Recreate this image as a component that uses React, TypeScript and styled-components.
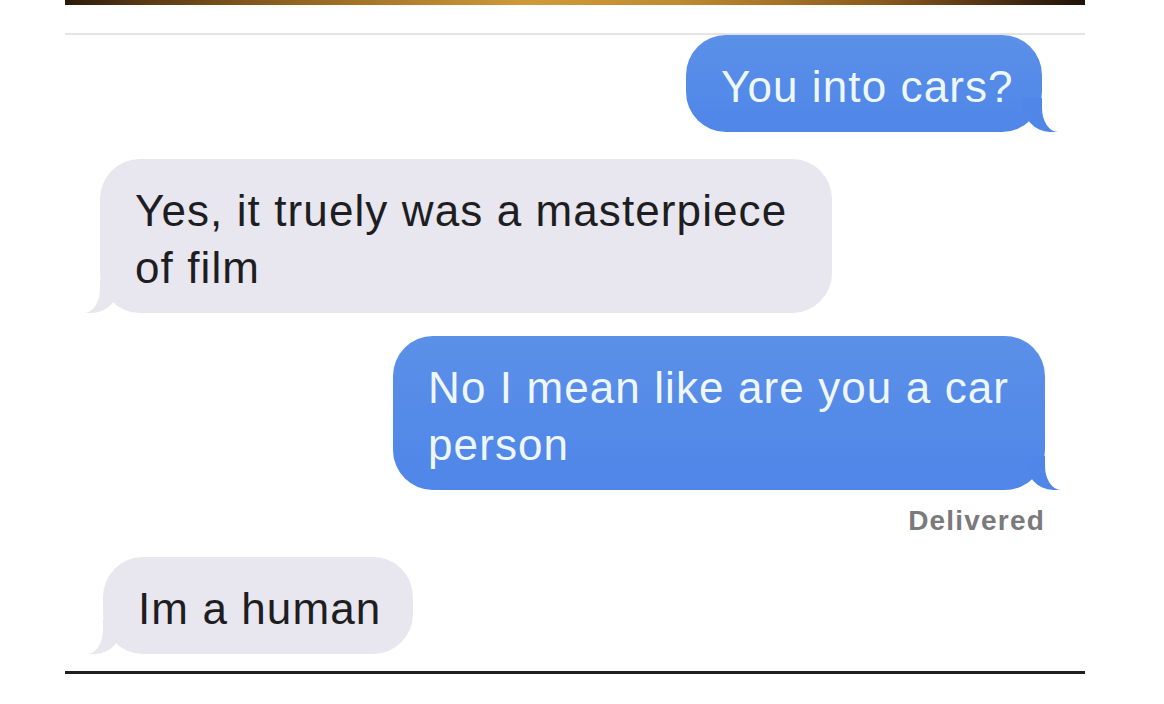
import React from "react";
import styled, { createGlobalStyle, css } from "styled-components";

const Global = createGlobalStyle`
  html, body { margin: 0; padding: 0; background: #ffffff; }
  body { font-family: "Liberation Sans", Arial, sans-serif; }
`;

const Page = styled.div`
  width: 1020px;
  margin-left: 65px;
  display: flex;
  flex-direction: column;
`;

const TopBar = styled.div`
  height: 5px;
  background: linear-gradient(
    90deg,
    #2a1a0c 0%,
    #5a3a14 8%,
    #9a6a22 25%,
    #d09a3a 45%,
    #c08a30 60%,
    #8a5a1c 80%,
    #3a2210 95%,
    #1e120a 100%
  );
`;

const Divider = styled.div`
  margin-top: 28px;
  height: 2px;
  background: #e4e4e6;
`;

const Thread = styled.div`
  display: flex;
  flex-direction: column;
`;

const Row = styled.div<{ $side: "left" | "right"; $inset: number; $gap: number }>`
  display: flex;
  justify-content: ${(p) => (p.$side === "right" ? "flex-end" : "flex-start")};
  padding-left: ${(p) => (p.$side === "left" ? p.$inset : 0)}px;
  padding-right: ${(p) => (p.$side === "right" ? p.$inset : 0)}px;
  margin-top: ${(p) => p.$gap}px;
`;

const Bubble = styled.div<{ $side: "left" | "right"; $w: number }>`
  position: relative;
  box-sizing: border-box;
  width: ${(p) => p.$w}px;
  border-radius: 40px;
  font-size: 44px;
  line-height: 57px;
  letter-spacing: 1.1px;
  padding: 23px 28px 17px 35px;
  ${(p) =>
    p.$side === "right"
      ? css`
          background: linear-gradient(180deg, #5b90e8 0%, #4f86e8 100%);
          color: #eef7fb;
        `
      : css`
          background: #e8e6ee;
          color: #1e1e22;
        `}

  &::before {
    content: "";
    position: absolute;
    bottom: 0;
    height: 34px;
    width: 36px;
    ${(p) =>
      p.$side === "right"
        ? css`
            right: -16px;
            background: #4f86e8;
            border-bottom-left-radius: 28px 32px;
          `
        : css`
            left: -16px;
            background: #e8e6ee;
            border-bottom-right-radius: 28px 32px;
          `}
  }

  &::after {
    content: "";
    position: absolute;
    bottom: 0;
    height: 36px;
    width: 20px;
    background: #ffffff;
    ${(p) =>
      p.$side === "right"
        ? css`
            right: -20px;
            border-bottom-left-radius: 16px 24px;
          `
        : css`
            left: -20px;
            border-bottom-right-radius: 16px 24px;
          `}
  }
`;

const Status = styled.div`
  display: flex;
  justify-content: flex-end;
  padding-right: 40px;
  margin-top: 17px;
  font-size: 28px;
  line-height: 28px;
  font-weight: 700;
  letter-spacing: 1.2px;
  color: #7a7a7c;
`;

const BottomRule = styled.div`
  margin-top: 17px;
  height: 3px;
  background: #1f1f1f;
`;

type Msg = {
  side: "left" | "right";
  lines: string[];
  width: number;
  inset: number;
  gap: number;
};

const messages: Msg[] = [
  { side: "right", lines: ["You into cars?"], width: 356, inset: 43, gap: 0 },
  {
    side: "left",
    lines: ["Yes, it truely was a masterpiece", "of film"],
    width: 732,
    inset: 35,
    gap: 27,
  },
  {
    side: "right",
    lines: ["No I mean like are you a car", "person"],
    width: 652,
    inset: 40,
    gap: 23,
  },
];

export default function App() {
  return (
    <>
      <Global />
      <Page>
        <TopBar />
        <Divider />
        <Thread>
          {messages.map((m, i) => (
            <Row key={i} $side={m.side} $inset={m.inset} $gap={m.gap}>
              <Bubble $side={m.side} $w={m.width}>
                {m.lines.map((l, j) => (
                  <div key={j}>{l}</div>
                ))}
              </Bubble>
            </Row>
          ))}
          <Status>Delivered</Status>
          <Row $side="left" $inset={38} $gap={22}>
            <Bubble $side="left" $w={310}>
              <div>Im a human</div>
            </Bubble>
          </Row>
        </Thread>
        <BottomRule />
      </Page>
    </>
  );
}
